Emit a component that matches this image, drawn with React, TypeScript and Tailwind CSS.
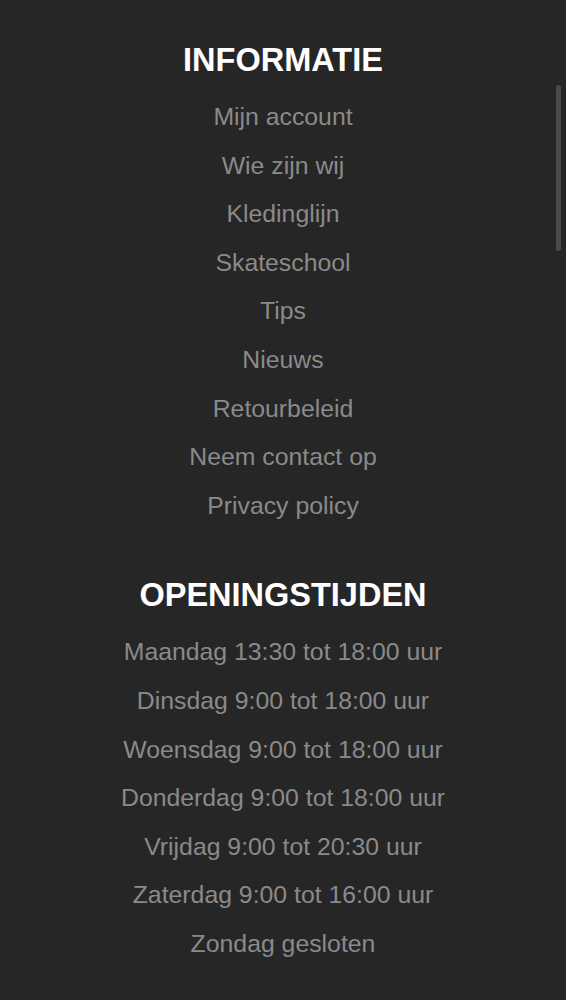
import React from 'react';

const links = [
  'Mijn account',
  'Wie zijn wij',
  'Kledinglijn',
  'Skateschool',
  'Tips',
  'Nieuws',
  'Retourbeleid',
  'Neem contact op',
  'Privacy policy',
];

const hours = [
  'Maandag 13:30 tot 18:00 uur',
  'Dinsdag 9:00 tot 18:00 uur',
  'Woensdag 9:00 tot 18:00 uur',
  'Donderdag 9:00 tot 18:00 uur',
  'Vrijdag 9:00 tot 20:30 uur',
  'Zaterdag 9:00 tot 16:00 uur',
  'Zondag gesloten',
];

const FooterBlock = ({ title, items, isLink }: { title: string; items: string[]; isLink?: boolean }) => (
  <div className="flex flex-col items-center">
    <h2 className="text-[32.5px] leading-[40px] font-bold uppercase text-white">{title}</h2>
    <ul className="mt-[13px] flex flex-col items-center">
      {items.map((item) => (
        <li key={item} className="text-[24.8px] leading-[48.6px] text-[#8a8a8a]">
          {isLink ? <a href="#" className="hover:text-white">{item}</a> : item}
        </li>
      ))}
    </ul>
  </div>
);

export default function App() {
  return (
    <footer
      className="relative w-full h-[1000px] overflow-hidden bg-[#262626] pt-[40px]"
      style={{ fontFamily: '"Liberation Sans", Arial, sans-serif' }}
    >
      <div className="flex flex-col gap-[45px]">
        <FooterBlock title="Informatie" items={links} isLink />
        <FooterBlock title="Openingstijden" items={hours} />
      </div>
      <div className="absolute right-[5px] top-[85px] h-[166px] w-[5px] rounded-full bg-[#4a4a4a]" />
    </footer>
  );
}
